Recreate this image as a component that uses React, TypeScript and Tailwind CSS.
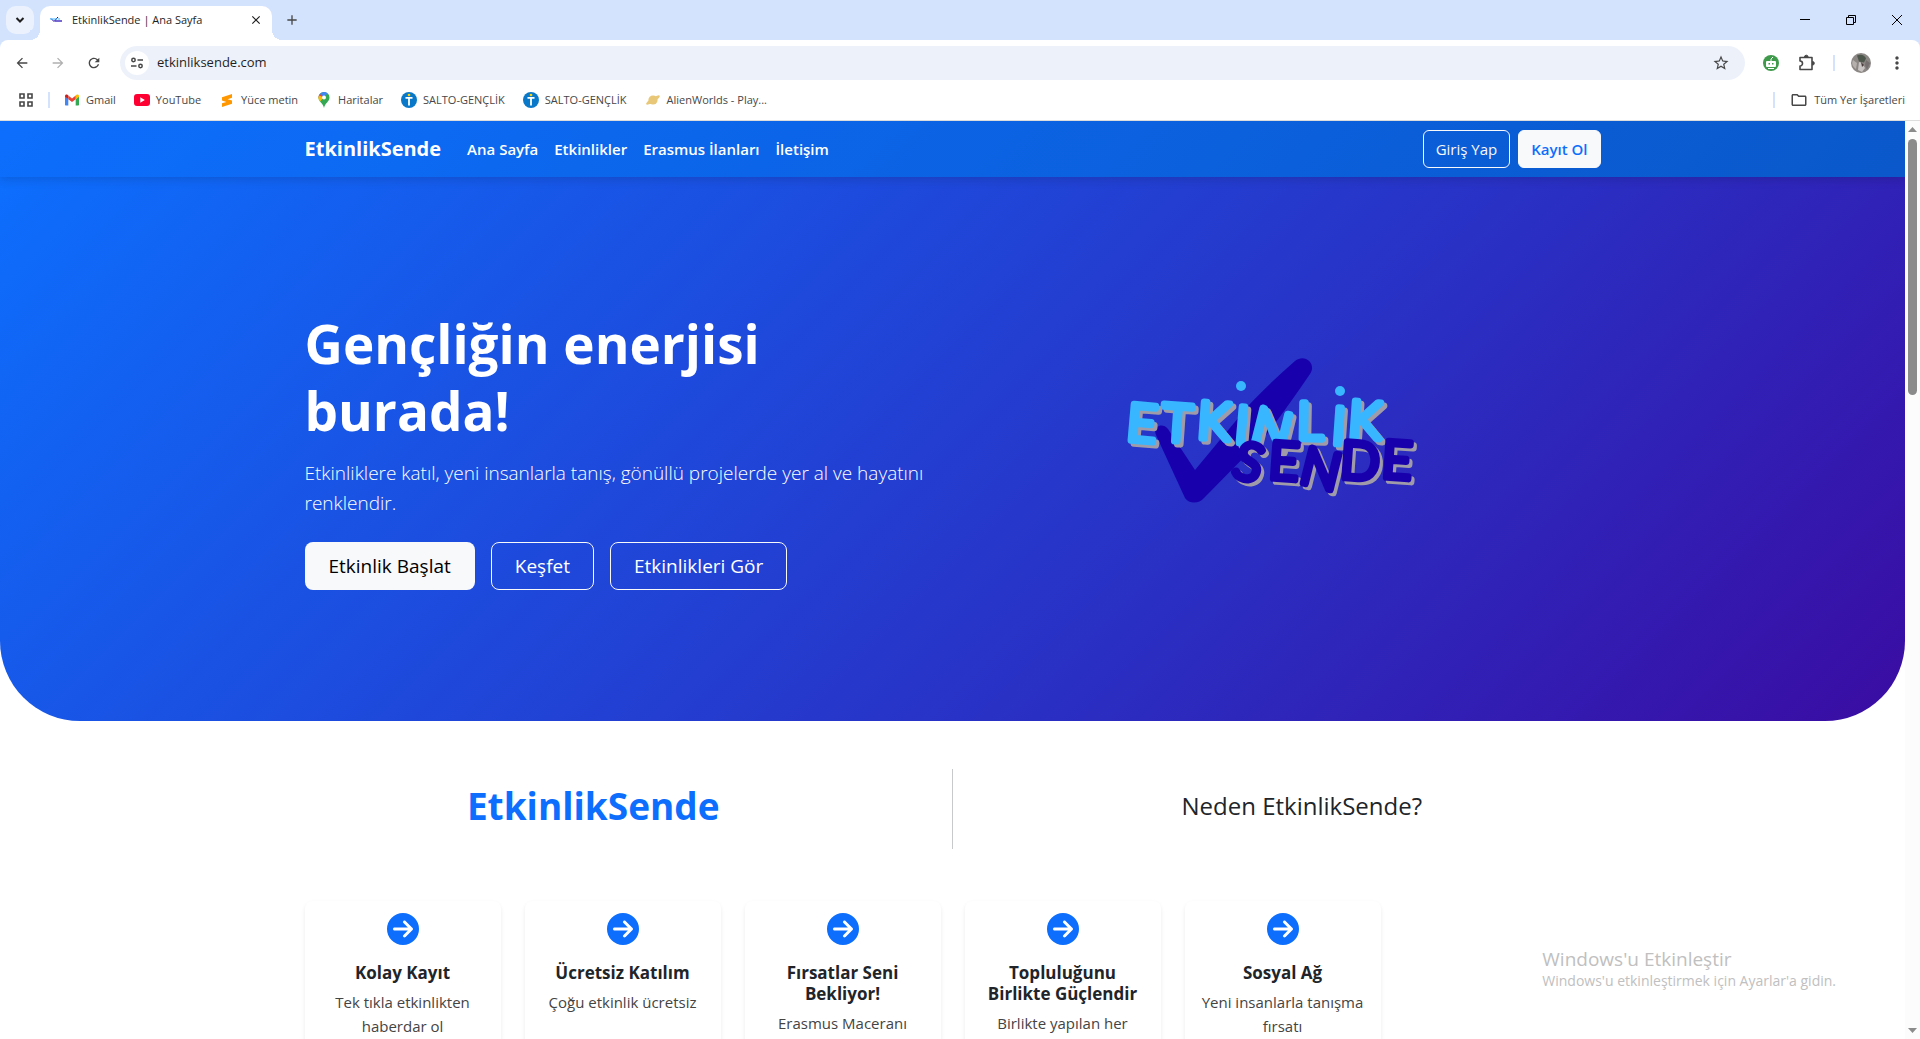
import type { ReactNode } from 'react';
import { FaCircleArrowRight } from 'react-icons/fa6';
import {
  MdAdd,
  MdArrowBack,
  MdArrowForward,
  MdClose,
  MdMoreVert,
  MdOutlineFolder,
  MdRefresh,
  MdStarBorder,
} from 'react-icons/md';

const navItems = [
  { href: '#ana-sayfa', label: 'Ana Sayfa' },
  { href: '#etkinlikler', label: 'Etkinlikler' },
  { href: '#erasmus', label: 'Erasmus İlanları' },
  { href: '#iletisim', label: 'İletişim' },
];

const features = [
  { title: 'Kolay Kayıt', text: 'Tek tıkla etkinlikten haberdar ol' },
  { title: 'Ücretsiz Katılım', text: 'Çoğu etkinlik ücretsiz' },
  { title: 'Fırsatlar Seni Bekliyor!', text: 'Erasmus Maceranı' },
  { title: 'Topluluğunu Birlikte Güçlendir', text: 'Birlikte yapılan her' },
  { title: 'Sosyal Ağ', text: 'Yeni insanlarla tanışma fırsatı' },
];

function GmailIcon() {
  return (
    <svg viewBox="0 0 16 16" className="size-4" aria-hidden="true">
      <path d="M1 4.5v8c0 .6.4 1 1 1h2.3V7z" fill="#4285f4" />
      <path d="M15 4.5v8c0 .6-.4 1-1 1h-2.3V7z" fill="#34a853" />
      <path d="M11.7 3.6V7.2L15 4.8V4c0-1.4-1.5-2-2.5-1.2z" fill="#fbbc04" />
      <path d="M1 4.8 4.3 7.2V3.6l-.8-.8C2.5 2 1 2.6 1 4z" fill="#c5221f" />
      <path d="M4.3 7.2V3.6L8 6.4l3.7-2.8v3.6L8 10z" fill="#ea4335" />
    </svg>
  );
}

function YouTubeIcon() {
  return (
    <svg viewBox="0 0 16 16" className="size-4" aria-hidden="true">
      <rect x="0" y="2" width="16" height="12" rx="3" fill="#ff0033" />
      <path d="M6.3 5.3v5.4L10.8 8z" fill="#fff" />
    </svg>
  );
}

function SublimeIcon() {
  return (
    <svg viewBox="0 0 16 16" className="size-4" aria-hidden="true">
      <path d="M3 5.3 13 2v3.8L8.6 7.2 13 8.6v3.2L3 15v-3.7l4.4-1.4L3 8.5z" fill="#ff9800" />
    </svg>
  );
}

function MapsIcon() {
  return (
    <svg viewBox="0 0 16 16" className="size-4" aria-hidden="true">
      <path d="M8 0a5.5 5.5 0 0 0-5.5 5.5c0 4.5 4.5 5 5.5 10.5 1-5.5 5.5-6 5.5-10.5A5.5 5.5 0 0 0 8 0z" fill="#34a853" />
      <path d="M8 0a5.5 5.5 0 0 0-4.2 1.9L8 5.5l3.5-4.2A5.5 5.5 0 0 0 8 0z" fill="#4285f4" />
      <path d="M3.8 1.9A5.5 5.5 0 0 0 2.5 5.5L6 6.5 8 5.5z" fill="#ea4335" />
      <path d="M2.5 5.5c0 1.7.6 2.8 1.4 3.9L8 5.5 3.5 3.5z" fill="#fbbc04" />
      <circle cx="8" cy="5.5" r="2" fill="#fff" />
    </svg>
  );
}

function SaltoIcon() {
  return (
    <svg viewBox="0 0 16 16" className="size-4" aria-hidden="true">
      <circle cx="8" cy="8" r="8" fill="#0a78c8" />
      <circle cx="8" cy="3" r="1.3" fill="#ffd000" />
      <path d="M4.5 5.8h7M8 5.5v8" stroke="#fff" strokeWidth="1.8" />
    </svg>
  );
}

function PlanetIcon() {
  return (
    <svg viewBox="0 0 16 16" className="size-4" aria-hidden="true">
      <circle cx="8" cy="8" r="4.6" fill="#e8c878" />
      <ellipse cx="8" cy="8" rx="8" ry="2.2" fill="#e8c878" transform="rotate(-32 8 8)" />
    </svg>
  );
}

function PuzzleIcon() {
  return (
    <svg viewBox="0 0 20 20" className="size-5" fill="none" stroke="currentColor" strokeWidth="1.6" aria-hidden="true">
      <path d="M3 4.5h12v12H3v-3.5a2.5 2.5 0 0 0 0-5z" strokeLinejoin="round" />
      <path d="M7.5 4a1.8 1.8 0 0 1 3.6 0zM15.5 8.5a1.8 1.8 0 0 1 0 3.6z" fill="currentColor" strokeWidth="1" />
    </svg>
  );
}

const bookmarks: { label: string; icon: ReactNode }[] = [
  { label: 'Gmail', icon: <GmailIcon /> },
  { label: 'YouTube', icon: <YouTubeIcon /> },
  { label: 'Yüce metin', icon: <SublimeIcon /> },
  { label: 'Haritalar', icon: <MapsIcon /> },
  { label: 'SALTO-GENÇLİK', icon: <SaltoIcon /> },
  { label: 'SALTO-GENÇLİK', icon: <SaltoIcon /> },
  { label: 'AlienWorlds - Play...', icon: <PlanetIcon /> },
];

// x = letter centre, y = baseline, r = tilt in degrees
const topLetters = [
  { c: 'E', x: 43, y: 101, r: 5 },
  { c: 'T', x: 78, y: 101, r: 4 },
  { c: 'K', x: 115, y: 99, r: 4 },
  { c: 'I', x: 143, y: 103, r: 5 },
  { c: 'N', x: 173, y: 107, r: 14 },
  { c: 'L', x: 211, y: 99, r: 1 },
  { c: 'I', x: 240, y: 104, r: 4 },
  { c: 'K', x: 266, y: 98, r: 4 },
];

const bottomLetters = [
  { c: 'S', x: 150, y: 140, r: 16 },
  { c: 'E', x: 185, y: 139, r: 4 },
  { c: 'N', x: 222, y: 147, r: 14 },
  { c: 'D', x: 261, y: 139, r: 4 },
  { c: 'E', x: 298, y: 138, r: 4 },
];

function LogoWord({ letters, color }: { letters: typeof topLetters; color: string }) {
  return (
    <>
      {['#a09ba8', color].map((fill, layer) => (
        <g key={fill} fill={fill} stroke={fill} transform={layer === 0 ? 'translate(3 3)' : undefined}>
          {letters.map((l, i) => (
            <text key={i} x={l.x} y={l.y} transform={`rotate(${l.r} ${l.x} ${l.y - 18})`}>
              {l.c}
            </text>
          ))}
        </g>
      ))}
    </>
  );
}

function HeroLogo() {
  return (
    <svg
      viewBox="0 0 340 180"
      className="h-[180px] w-[340px]"
      role="img"
      aria-label="Etkinlik Sende"
      fontFamily="Lato, sans-serif"
      fontWeight="300"
      fontSize="51"
      textAnchor="middle"
      strokeWidth="7"
      strokeLinejoin="round"
    >
      <path
        d="M57 95C53 86 64 82 69 89L96 130L150 65C164 50 180 35 196 21C206 13 218 24 211 34C196 56 182 76 168 94L105 158C100 164 90 164 86 158Z"
        fill="#1800ad"
      />
      <LogoWord letters={topLetters} color="#38b6ff" />
      <circle cx="142" cy="46" r="5" fill="#38b6ff" />
      <circle cx="241" cy="51" r="5" fill="#38b6ff" />
      <LogoWord letters={bottomLetters} color="#1800ad" />
    </svg>
  );
}

function BrowserChrome() {
  return (
    <header className="shrink-0 bg-[#d3e3fd] text-[#1f1f1f]">
      <div className="flex h-10 items-center">
        <button aria-label="Sekmelerde ara" className="ml-[6px] flex size-7 items-center justify-center rounded-[10px] bg-[#ebf2fe]">
          <svg viewBox="0 0 10 10" className="size-[10px]" fill="none" stroke="currentColor" strokeWidth="2" aria-hidden="true">
            <path d="M1.5 3 5 6.5 8.5 3" />
          </svg>
        </button>
        <div className="relative ml-[6px] flex h-[34px] w-[232px] items-center self-end rounded-t-[10px] bg-white pr-2 pb-[6px] pl-[10px]">
          <svg viewBox="0 0 12 12" className="size-3" fill="none" aria-hidden="true">
            <path d="M1 4.5 4 7.5 8 3" stroke="#1800ad" />
            <path d="M0 5h7M9 4v2" stroke="#38b6ff" />
            <path d="M5 7h7" stroke="#4a35c0" strokeWidth="1.5" />
          </svg>
          <span className="ml-[10px] flex-1 text-[11px] whitespace-nowrap">EtkinlikSende | Ana Sayfa</span>
          <button aria-label="Sekmeyi kapat" className="flex size-4 items-center justify-center">
            <MdClose className="size-[14px]" />
          </button>
          <span className="absolute bottom-0 -left-[10px] size-[10px] bg-[radial-gradient(circle_at_0_0,#d3e3fd_10px,#fff_10px)]" />
          <span className="absolute -right-[10px] bottom-0 size-[10px] bg-[radial-gradient(circle_at_100%_0,#d3e3fd_10px,#fff_10px)]" />
        </div>
        <button aria-label="Yeni sekme" className="ml-3 flex size-4 items-center justify-center text-[#474747]">
          <MdAdd className="size-4" />
        </button>
        <div className="ml-auto flex items-center gap-9 pr-[18px] text-black">
          <button aria-label="Küçült">
            <svg viewBox="0 0 10 10" className="size-[10px]" aria-hidden="true">
              <path d="M0 4.5h10" stroke="currentColor" />
            </svg>
          </button>
          <button aria-label="Geri yükle">
            <svg viewBox="0 0 10 10" className="size-[10px]" fill="none" stroke="currentColor" aria-hidden="true">
              <path d="M.5 2.5h7v7h-7zM2.5 2.5v-2h7v7h-2" />
            </svg>
          </button>
          <button aria-label="Kapat">
            <svg viewBox="0 0 10 10" className="size-[10px]" stroke="currentColor" aria-hidden="true">
              <path d="M0 0l10 10M10 0 0 10" />
            </svg>
          </button>
        </div>
      </div>

      <div className="rounded-t-[8px] border-b border-[#dddddd] bg-white">
        <div className="flex h-[46px] items-center pr-[13px] pl-[14px] text-[#474747]">
          <button aria-label="Geri">
            <MdArrowBack className="size-4" />
          </button>
          <button aria-label="İleri" className="ml-5 text-[#b0b0b0]">
            <MdArrowForward className="size-4" />
          </button>
          <button aria-label="Yenile" className="ml-5">
            <MdRefresh className="size-4" />
          </button>
          <div className="ml-[18px] flex h-[34px] flex-1 items-center rounded-full bg-[#edf2fa] pr-[15px] pl-[5px]">
            <button aria-label="Site bilgileri" className="flex size-6 items-center justify-center rounded-full bg-white">
              <svg viewBox="0 0 12 12" className="size-3" fill="none" stroke="currentColor" strokeWidth="1.5" aria-hidden="true">
                <circle cx="2.5" cy="3" r="1.7" />
                <path d="M6.5 3H12M0 9h5.5" />
                <circle cx="9.5" cy="9" r="1.7" />
              </svg>
            </button>
            <input
              aria-label="Adres çubuğu"
              defaultValue="etkinliksende.com"
              className="ml-2 min-w-0 flex-1 bg-transparent text-[13px] text-[#1f1f1f] outline-none"
            />
            <button aria-label="Yer işareti ekle">
              <MdStarBorder className="size-[18px]" />
            </button>
          </div>
          <button aria-label="Uzantı" className="ml-[18px]">
            <svg viewBox="0 0 16 16" className="size-4" aria-hidden="true">
              <circle cx="8" cy="8" r="8" fill="#3f9a4c" />
              <rect x="3" y="6" width="10" height="6" rx="1" fill="#fff" />
              <path d="M8 6V4l2-2M5 13.5h6" stroke="#fff" fill="none" />
              <path d="M5.5 8H7v1.5H5.5zM9 8h1.5v1.5H9z" fill="#3f9a4c" />
            </svg>
          </button>
          <button aria-label="Uzantılar" className="ml-[18px]">
            <PuzzleIcon />
          </button>
          <span className="ml-4 h-4 w-[2px] bg-[#d3e3fd]" />
          <button aria-label="Profil" className="ml-4">
            <svg viewBox="0 0 20 20" className="size-5" aria-hidden="true">
              <circle cx="10" cy="10" r="10" fill="#8b8785" />
              <path d="M6 2.5c4-2 8 0 9 3l-2 4-5-1z" fill="#4e574b" />
              <path d="M2 7l4 3-1 6C2 14 0 11 2 7z" fill="#b5b0ad" />
              <path d="M8 9l3 1 3 5-3 4-4-2z" fill="#c9c5c4" />
              <path d="M10 9l3 3-2 2z" fill="#4a3c3a" />
              <path d="M15 7l4 3-3 7-2-5z" fill="#75706f" />
            </svg>
          </button>
          <button aria-label="Menü" className="ml-4">
            <MdMoreVert className="size-5" />
          </button>
        </div>

        <div className="flex h-[34px] items-center pr-[15px] pb-[6px] pl-[19px] text-[11px] text-[#474747]">
          <button aria-label="Uygulamalar">
            <svg viewBox="0 0 14 14" className="size-[14px]" fill="none" stroke="currentColor" strokeWidth="1.6" aria-hidden="true">
              <path d="M1 1h4v4H1zM9 1h4v4H9zM1 9h4v4H1zM9 9h4v4H9z" />
            </svg>
          </button>
          <span className="ml-[15px] h-4 w-[2px] bg-[#d3e3fd]" />
          <div className="ml-[14px] flex items-center gap-[18px]">
            {bookmarks.map((b, i) => (
              <a key={i} href="#yer-isareti" className="flex items-center gap-[6px] whitespace-nowrap">
                {b.icon}
                {b.label}
              </a>
            ))}
          </div>
          <span className="ml-auto h-4 w-[2px] bg-[#d3e3fd]" />
          <button className="ml-[15px] flex items-center gap-[6px]">
            <MdOutlineFolder className="size-[18px]" />
            Tüm Yer İşaretleri
          </button>
        </div>
      </div>
    </header>
  );
}

function Navbar() {
  return (
    <nav className="relative z-10 bg-[linear-gradient(135deg,#0d6efd,#0a58ca)] shadow-[0_2px_10px_rgba(0,0,0,0.15)]">
      <div className="mx-auto flex h-14 max-w-[1320px] items-center px-3">
        <a href="#ana-sayfa" className="mr-[18px] text-[20px] font-bold text-white">
          EtkinlikSende
        </a>
        {navItems.map((item) => (
          <a key={item.href} href={item.href} className="px-2 text-[15px] font-semibold text-white">
            {item.label}
          </a>
        ))}
        <div className="ml-auto flex gap-2 text-[15px]">
          <a href="#giris" className="flex h-[38px] items-center rounded-md border border-[#f8f9fa] px-3 text-[#f8f9fa]">
            Giriş Yap
          </a>
          <a href="#kayit" className="flex h-[38px] items-center rounded-md border border-[#f8f9fa] bg-[#f8f9fa] px-3 font-semibold text-[#0d6efd]">
            Kayıt Ol
          </a>
        </div>
      </div>
    </nav>
  );
}

function Hero() {
  return (
    <section className="rounded-b-[80px] bg-[linear-gradient(135deg,#0d6efd,#3a0ca3)] text-white">
      <div className="mx-auto grid min-h-[544px] max-w-[1320px] grid-cols-2 items-center">
        <div className="px-3 pt-[2px]">
          <h1 className="text-[53px] leading-[67px] font-bold">Gençliğin enerjisi burada!</h1>
          <p className="mt-[14px] text-[19px] leading-[30px] font-light">
            Etkinliklere katıl, yeni insanlarla tanış, gönüllü projelerde yer al ve hayatını renklendir.
          </p>
          <div className="mt-6 flex gap-4 text-[19px]">
            <button className="h-12 rounded-lg bg-[#f8f9fa] px-6 text-black">Etkinlik Başlat</button>
            <button className="h-12 rounded-lg border border-[#f8f9fa] px-[23px]">Keşfet</button>
            <button className="h-12 rounded-lg border border-[#f8f9fa] px-[23px]">Etkinlikleri Gör</button>
          </div>
        </div>
        <div className="flex justify-center pr-7 pb-[38px]">
          <HeroLogo />
        </div>
      </div>
    </section>
  );
}

function Features() {
  return (
    <section className="mx-auto max-w-[1320px] px-3 pt-12 text-center">
      <div className="grid grid-cols-[1fr_1px_1fr] items-center">
        <h2 className="pr-[70px] pb-[6px] text-[37px] leading-[48px] font-bold text-[#0d6efd]">EtkinlikSende</h2>
        <span className="h-20 bg-[#c8c9ca]" />
        <h3 className="pb-[6px] pl-[50px] text-[24px] leading-7 font-medium text-[#212529]">Neden EtkinlikSende?</h3>
      </div>
      <div className="mt-[52px] grid grid-cols-6 gap-6">
        {features.map((f) => (
          <article key={f.title} className="rounded-lg px-3 pt-3 pb-6 shadow-[0_2px_4px_rgba(0,0,0,0.08)]">
            <FaCircleArrowRight className="mx-auto size-8 text-[#0d6efd]" />
            <h4 className="mt-[17px] text-[17px] leading-[21px] font-bold text-[#212529]">{f.title}</h4>
            <p className="mt-[7px] text-[15px] leading-6 text-[#444444]">{f.text}</p>
          </article>
        ))}
      </div>
    </section>
  );
}

export default function App() {
  return (
    <div className="relative flex h-screen flex-col overflow-hidden bg-white font-['Open_Sans','Noto_Sans',sans-serif]">
      <BrowserChrome />
      <div className="flex min-h-0 flex-1">
        <main className="flex-1 overflow-hidden">
          <Navbar />
          <Hero />
          <Features />
        </main>
        <div className="flex w-[15px] flex-col items-center justify-between bg-[#fcfcfc] pt-[6px] pb-[6px]">
          <svg viewBox="0 0 9 5" className="h-[5px] w-[9px]" aria-hidden="true">
            <path d="M0 5 4.5 0 9 5z" fill="#8b8b8b" />
          </svg>
          <span className="mt-[7px] h-[256px] w-[9px] rounded-full bg-[#8b8b8b]" />
          <svg viewBox="0 0 9 5" className="mt-auto h-[5px] w-[9px]" aria-hidden="true">
            <path d="M0 0 4.5 5 9 0z" fill="#8b8b8b" />
          </svg>
        </div>
      </div>
      <div className="absolute right-[84px] bottom-[48px] text-[#c0c0c0]">
        <p className="text-[19px] leading-6">Windows'u Etkinleştir</p>
        <p className="text-[14px] leading-5">Windows'u etkinleştirmek için Ayarlar'a gidin.</p>
      </div>
    </div>
  );
}
